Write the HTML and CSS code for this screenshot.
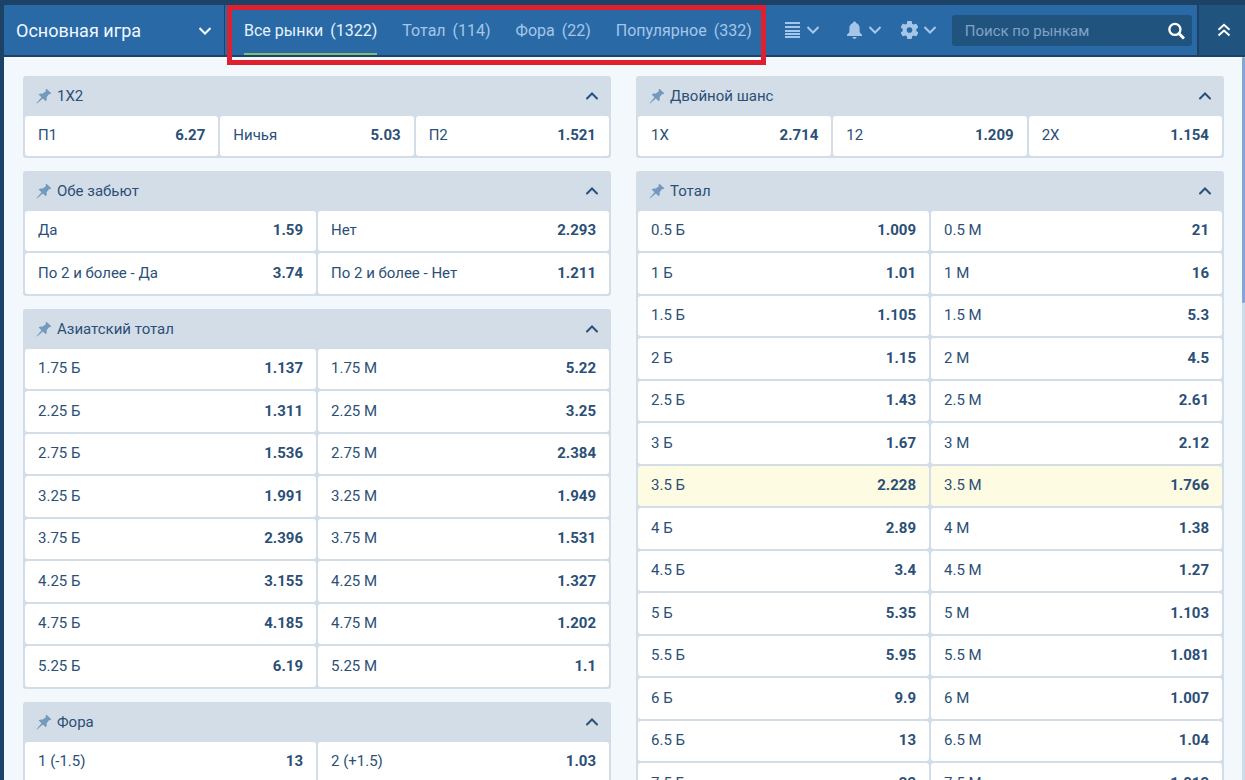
FILE: index.html
```html
<!DOCTYPE html>
<html lang="ru">
<head>
<meta charset="utf-8">
<meta name="viewport" content="width=device-width, initial-scale=1">
<title>Основная игра</title>
<link rel="stylesheet" href="styles.css">
</head>
<body>
<svg class="sprite" aria-hidden="true">
  <symbol id="down" viewBox="0 0 12 8"><path d="M.5 1L6 6.500 11.500 1" fill="none" stroke="currentColor" stroke-width="2"/></symbol>
  <symbol id="up" viewBox="0 0 12 8"><path d="M1 6.500l5-5 5 5" fill="none" stroke="currentColor" stroke-width="2" stroke-linecap="round"/></symbol>
  <symbol id="pin" viewBox="0 0 16 16"><path d="M10.5 0.8L15.3 5.2L14.2 6.2L13.2 6L10.6 9.2C11 10.8 10.7 12.2 9.8 13.2L6.8 10.4L1 15.6L0.5 15.2L5.5 9.2L2.6 6.5C3.8 5.5 5.3 5.2 6.9 5.6L10 3L9.5 1.8Z" fill="currentColor"/></symbol>
</svg>

<header class="topbar">
  <button class="game" type="button">Основная игра<svg class="chev"><use href="#down"/></svg></button>
  <nav class="tabs" aria-label="Рынки">
    <a class="tab tab-active" href="#all"><span>Все рынки</span><span>(1322)</span></a>
    <a class="tab" href="#total"><span>Тотал</span><span>(114)</span></a>
    <a class="tab" href="#fora"><span>Фора</span><span>(22)</span></a>
    <a class="tab" href="#popular"><span>Популярное</span><span>(332)</span></a>
  </nav>
  <div class="tools">
    <button class="tool tool-view" type="button" aria-label="Вид">
      <svg class="icon" viewBox="0 0 17 18"><path d="M1 1h15v2H1zM1 5h15v2H1zM1 9h15v2H1zM1 12h15v2H1zM1 15h15v2H1z" fill="currentColor"/></svg>
      <svg class="chev"><use href="#down"/></svg>
    </button>
    <button class="tool" type="button" aria-label="Уведомления">
      <svg class="icon" viewBox="0 0 16 18"><path d="M8 0.5c.9 0 1.5.6 1.5 1.4C11.900 2.600 13.100 4.500 13.100 7v4.200L15.500 13.800v1.200H.5v-1.200L2.900 11.200V7c0-2.500 1.200-4.400 3.600-5.100C6.500 1.100 7.100.5 8 .5zM6 16h4c0 1-.8 1.800-2 1.800S6 17 6 16z" fill="currentColor"/></svg>
      <svg class="chev"><use href="#down"/></svg>
    </button>
    <button class="tool" type="button" aria-label="Настройки">
      <svg class="icon" viewBox="3 3 18 18"><path fill="currentColor" d="M19.140 12.940c.04-.3.06-.61.06-.94 0-.32-.02-.64-.07-.94l2.030-1.580c.18-.14.23-.41.12-.61l-1.920-3.320c-.12-.22-.37-.29-.59-.22l-2.390.96c-.5-.38-1.030-.7-1.620-.94l-.36-2.540c-.04-.24-.24-.41-.48-.41h-3.840c-.24 0-.43.17-.47.41l-.36 2.540c-.59.24-1.130.57-1.620.94l-2.390-.96c-.22-.08-.47 0-.59.22L2.740 8.870c-.12.21-.08.47.12.61l2.030 1.580c-.05.3-.09.63-.09.94s.02.64.07.94l-2.030 1.580c-.18.14-.23.41-.12.61l1.920 3.320c.12.22.37.29.59.22l2.390-.96c.5.38 1.030.7 1.620.94l.36 2.540c.05.24.24.41.48.41h3.840c.24 0 .44-.17.47-.41l.36-2.540c.59-.24 1.130-.56 1.620-.94l2.390.96c.22.08.47 0 .59-.22l1.920-3.320c.12-.22.07-.47-.12-.61l-2.010-1.580zM12 15a3 3 0 1 1 0-6 3 3 0 0 1 0 6z"/></svg>
      <svg class="chev"><use href="#down"/></svg>
    </button>
  </div>
  <form class="search">
    <input class="search-input" type="text" placeholder="Поиск по рынкам" aria-label="Поиск по рынкам">
    <button class="search-button" type="button" aria-label="Найти">
      <svg class="icon" viewBox="0 0 16 16"><circle cx="6.500" cy="6.500" r="5.200" fill="none" stroke="currentColor" stroke-width="2.200"/><path d="M10.300 10.300L15 15" stroke="currentColor" stroke-width="2.800"/></svg>
    </button>
  </form>
  <button class="collapse" type="button" aria-label="Свернуть">
    <svg class="double" viewBox="0 0 14 14"><path d="M1.500 6.800L7 1.800l5.500 5M1.500 12.600L7 7.600l5.500 5" fill="none" stroke="currentColor" stroke-width="2"/></svg>
  </button>
</header>

<div class="body">
  <main class="markets">
    <div class="column">
      <section class="panel">
        <h2 class="panel-head"><svg class="pin"><use href="#pin"/></svg>1X2<button class="fold" type="button" aria-label="Свернуть"><svg class="chev"><use href="#up"/></svg></button></h2>
        <div class="odds odds-three">
          <button class="odd">П1<b>6.27</b></button><button class="odd">Ничья<b>5.03</b></button><button class="odd">П2<b>1.521</b></button>
        </div>
      </section>
      <section class="panel">
        <h2 class="panel-head"><svg class="pin"><use href="#pin"/></svg>Обе забьют<button class="fold" type="button" aria-label="Свернуть"><svg class="chev"><use href="#up"/></svg></button></h2>
        <div class="odds">
          <button class="odd">Да<b>1.59</b></button><button class="odd">Нет<b>2.293</b></button>
          <button class="odd">По 2 и более - Да<b>3.74</b></button><button class="odd">По 2 и более - Нет<b>1.211</b></button>
        </div>
      </section>
      <section class="panel">
        <h2 class="panel-head"><svg class="pin"><use href="#pin"/></svg>Азиатский тотал<button class="fold" type="button" aria-label="Свернуть"><svg class="chev"><use href="#up"/></svg></button></h2>
        <div class="odds">
          <button class="odd">1.75 Б<b>1.137</b></button><button class="odd">1.75 М<b>5.22</b></button>
          <button class="odd">2.25 Б<b>1.311</b></button><button class="odd">2.25 М<b>3.25</b></button>
          <button class="odd">2.75 Б<b>1.536</b></button><button class="odd">2.75 М<b>2.384</b></button>
          <button class="odd">3.25 Б<b>1.991</b></button><button class="odd">3.25 М<b>1.949</b></button>
          <button class="odd">3.75 Б<b>2.396</b></button><button class="odd">3.75 М<b>1.531</b></button>
          <button class="odd">4.25 Б<b>3.155</b></button><button class="odd">4.25 М<b>1.327</b></button>
          <button class="odd">4.75 Б<b>4.185</b></button><button class="odd">4.75 М<b>1.202</b></button>
          <button class="odd">5.25 Б<b>6.19</b></button><button class="odd">5.25 М<b>1.1</b></button>
        </div>
      </section>
      <section class="panel">
        <h2 class="panel-head"><svg class="pin"><use href="#pin"/></svg>Фора<button class="fold" type="button" aria-label="Свернуть"><svg class="chev"><use href="#up"/></svg></button></h2>
        <div class="odds">
          <button class="odd">1 (-1.5)<b>13</b></button><button class="odd">2 (+1.5)<b>1.03</b></button>
        </div>
      </section>
    </div>
    <div class="column">
      <section class="panel">
        <h2 class="panel-head"><svg class="pin"><use href="#pin"/></svg>Двойной шанс<button class="fold" type="button" aria-label="Свернуть"><svg class="chev"><use href="#up"/></svg></button></h2>
        <div class="odds odds-three">
          <button class="odd">1X<b>2.714</b></button><button class="odd">12<b>1.209</b></button><button class="odd">2X<b>1.154</b></button>
        </div>
      </section>
      <section class="panel">
        <h2 class="panel-head"><svg class="pin"><use href="#pin"/></svg>Тотал<button class="fold" type="button" aria-label="Свернуть"><svg class="chev"><use href="#up"/></svg></button></h2>
        <div class="odds">
          <button class="odd">0.5 Б<b>1.009</b></button><button class="odd">0.5 М<b>21</b></button>
          <button class="odd">1 Б<b>1.01</b></button><button class="odd">1 М<b>16</b></button>
          <button class="odd">1.5 Б<b>1.105</b></button><button class="odd">1.5 М<b>5.3</b></button>
          <button class="odd">2 Б<b>1.15</b></button><button class="odd">2 М<b>4.5</b></button>
          <button class="odd">2.5 Б<b>1.43</b></button><button class="odd">2.5 М<b>2.61</b></button>
          <button class="odd">3 Б<b>1.67</b></button><button class="odd">3 М<b>2.12</b></button>
          <button class="odd odd-marked">3.5 Б<b>2.228</b></button><button class="odd odd-marked">3.5 М<b>1.766</b></button>
          <button class="odd">4 Б<b>2.89</b></button><button class="odd">4 М<b>1.38</b></button>
          <button class="odd">4.5 Б<b>3.4</b></button><button class="odd">4.5 М<b>1.27</b></button>
          <button class="odd">5 Б<b>5.35</b></button><button class="odd">5 М<b>1.103</b></button>
          <button class="odd">5.5 Б<b>5.95</b></button><button class="odd">5.5 М<b>1.081</b></button>
          <button class="odd">6 Б<b>9.9</b></button><button class="odd">6 М<b>1.007</b></button>
          <button class="odd">6.5 Б<b>13</b></button><button class="odd">6.5 М<b>1.04</b></button>
          <button class="odd">7.5 Б<b>23</b></button><button class="odd">7.5 М<b>1.012</b></button>
        </div>
      </section>
    </div>
  </main>
  <div class="track"><div class="thumb"></div></div>
</div>
</body>
</html>
```
FILE: styles.css
```css
* { box-sizing: border-box; }

body {
  margin: 0;
  height: 100vh;
  padding: 5px 0 0 4px;
  display: flex;
  flex-direction: column;
  overflow: hidden;
  background: #1d4268;
  color: #2b4f76;
  font: 15px/20px Roboto, "Noto Sans", sans-serif;
}

button, input { font: inherit; color: inherit; border: 0; margin: 0; padding: 0; background: none; }
button { cursor: pointer; }
svg { display: block; flex: none; }

.sprite { position: absolute; width: 0; height: 0; }
.chev { width: 12px; height: 8px; }

.topbar {
  flex: none;
  display: flex;
  height: 50px;
  margin-bottom: 2px;
  background: #296aa6;
  color: #a5c6e8;
}

.game {
  flex: none;
  display: flex;
  align-items: center;
  justify-content: space-between;
  width: 221px;
  padding: 2px 13px 0 12px;
  border-right: 1px solid #1d4268;
  border-radius: 3px 0 0 0;
  color: #f2f8fd;
  font-size: 18px;
}

.tabs {
  position: relative;
  flex: none;
  display: flex;
  gap: 25px;
  padding: 0 14px 0 19px;
}

.tabs::after {
  content: "";
  position: absolute;
  z-index: 1;
  inset: 0 0 -10px 2px;
  border: 5px solid #df202e;
  pointer-events: none;
}

.tab {
  display: flex;
  align-items: center;
  gap: 7px;
  padding: 4px 0 0;
  border-bottom: 2px solid transparent;
  color: inherit;
  font-size: 16px;
  text-decoration: none;
}

.tab-active { color: #e6f2fd; border-color: #85bd77; }

.tools { flex: none; display: flex; gap: 20px; padding: 0 16px 0 18px; }
.tool { display: flex; align-items: center; gap: 6px; }
.tool-view { margin-right: 7px; }
.icon { width: 17px; height: 18px; }

.search {
  flex: 1;
  display: flex;
  align-items: center;
  min-width: 0;
  margin: 10px 5px 9px 0;
  padding: 0 7px 0 13px;
  border-radius: 3px;
  background: #21537f;
}

.search-input { flex: 1; min-width: 0; outline: 0; color: #fff; }
.search-input::placeholder { color: #7fa3c6; opacity: 1; }
.search-button { color: #fff; }

.collapse {
  flex: none;
  display: grid;
  place-items: center;
  width: 48px;
  padding-left: 4px;
  border-left: 2px solid #1d4268;
  background: #21537f;
  color: #fff;
}

.double { width: 14px; height: 14px; }

.body { flex: 1; min-height: 0; display: flex; background: #f3f8fd; }

.markets {
  flex: 1;
  min-width: 0;
  display: grid;
  grid-template-columns: 1fr 1fr;
  align-items: start;
  gap: 25px;
  padding: 19px 18px 0 19px;
  overflow: hidden;
}

.column { display: flex; flex-direction: column; gap: 13px; }

.panel { padding: 0 2px 2px; border-radius: 3px; background: #d3dde8; }

.panel-head {
  display: flex;
  align-items: center;
  gap: 5px;
  height: 40px;
  margin: 0;
  padding: 0 11px;
  font-size: 15px;
  font-weight: 400;
}

.pin { width: 16px; height: 16px; color: #7399bd; }
.fold { margin-left: auto; color: #28507c; }

.odds {
  display: grid;
  grid-template-columns: 1fr 1fr;
  grid-auto-rows: 40px 41px;
  gap: 2px;
}

.odds-three { grid-template-columns: 1fr 1fr 1fr; }

.odd {
  display: flex;
  align-items: center;
  justify-content: space-between;
  padding: 0 13px 2px;
  border-radius: 3px;
  background: #fff;
}

.odd b { font-weight: 700; }
.odd-marked { background: #fdfbe2; }

.track { flex: none; width: 3px; background: #cbdcee; }
.thumb { height: 34%; border-radius: 2px; background: #80a8d2; }
```
